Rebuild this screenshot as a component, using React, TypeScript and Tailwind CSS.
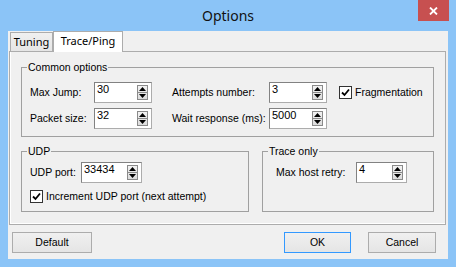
import type { ReactNode } from "react";

const ui = "font-['Liberation_Sans',Arial,sans-serif] text-[10.5px] text-black";

function Spin({ value, className }: { value: string; className: string }) {
  return (
    <div
      className={[
        "flex h-[21px] items-center border border-[#acacac] border-l-[#828282] border-t-[#828282] bg-white pr-[3px]",
        className,
      ].join(" ")}
    >
      <span className="flex-1 self-start pl-[2px] text-[11px] leading-[13px]">{value}</span>
      <div className="flex h-[15px] w-[11px] flex-col border border-[#8a8a8a] bg-gradient-to-b from-[#f2f2f2] to-[#dcdcdc]">
        <div className="flex flex-1 items-center justify-center border-b border-[#8a8a8a]">
          <svg width="7" height="4" viewBox="0 0 7 4">
            <path d="M3.5 0 L7 4 L0 4 Z" fill="#000" />
          </svg>
        </div>
        <div className="flex flex-1 items-center justify-center">
          <svg width="7" height="4" viewBox="0 0 7 4">
            <path d="M0 0 L7 0 L3.5 4 Z" fill="#000" />
          </svg>
        </div>
      </div>
    </div>
  );
}

function Check({ label, className }: { label: string; className?: string }) {
  return (
    <div className={["flex items-center gap-[3px] whitespace-nowrap", className ?? ""].join(" ")}>
      <span className="flex h-[13px] w-[13px] items-center justify-center border border-[#333] bg-white">
        <svg width="9" height="9" viewBox="0 0 9 9">
          <path d="M1 4.5 L3.5 7 L8 1.5" fill="none" stroke="#000" strokeWidth="1.8" />
        </svg>
      </span>
      <span className="leading-[13px]">{label}</span>
    </div>
  );
}

function Group({
  title,
  className,
  children,
}: {
  title: string;
  className: string;
  children: ReactNode;
}) {
  return (
    <fieldset className={["border border-[#a0a0a0] p-0", className].join(" ")}>
      <legend className="ml-[5px] px-[1px] leading-[13px]">{title}</legend>
      {children}
    </fieldset>
  );
}

function Btn({ label, className }: { label: string; className: string }) {
  return (
    <button
      type="button"
      className={[
        "flex h-[21px] items-center justify-center border bg-gradient-to-b from-[#f0f0f0] to-[#e5e5e5] leading-[13px]",
        className,
      ].join(" ")}
    >
      {label}
    </button>
  );
}

export default function App() {
  return (
    <div className={`h-[267px] w-[456px] overflow-hidden bg-[#8bc4f7] ${ui}`}>
      {/* title bar */}
      <div className="relative flex h-[31px] items-center justify-center">
        <span className="font-['Noto_Sans',sans-serif] text-[14px] leading-none text-[#111]">
          Options
        </span>
        <button
          type="button"
          className="absolute right-[7px] top-0 flex h-[21px] w-[31px] items-center justify-center bg-[#c75050]"
        >
          <svg width="9" height="8" viewBox="0 0 9 8">
            <path d="M1 0.5 L8 7.5 M8 0.5 L1 7.5" stroke="#fff" strokeWidth="1.8" />
          </svg>
        </button>
      </div>

      {/* client area */}
      <div className="mx-[8px] flex h-[228px] flex-col bg-[#f0f0f0]">
        {/* tabs */}
        <div className="flex h-[21px] items-end pl-[2px] font-['Noto_Sans',sans-serif] text-[11px]">
          <div className="flex h-[20px] w-[43px] items-center justify-center border border-b-0 border-[#acacac] bg-gradient-to-b from-[#f0f0f0] to-[#e5e5e5] pb-[1px]">
            Tuning
          </div>
          <div className="relative z-10 flex h-[21px] w-[70px] items-center justify-center border border-b-0 border-[#acacac] bg-white pb-[1px]">
            Trace/Ping
          </div>
        </div>

        {/* tab panel */}
        <div className="-mt-[1px] ml-[1px] flex h-[174px] w-[437px] flex-col border border-[#acacac] bg-[#f0f0f0] pl-[11px] pt-[9px] shadow-[inset_1px_-1px_0_#ffffff]">
          <Group title="Common options" className="w-[413px]">
            <div className="flex flex-col gap-[5px] whitespace-nowrap pb-[7px] pl-[8px] pt-[8px]">
              <div className="flex h-[21px] items-center">
                <span className="w-[64px]">Max Jump:</span>
                <Spin value="30" className="w-[58px]" />
                <span className="ml-[20px] w-[97px]">Attempts number:</span>
                <Spin value="3" className="w-[58px]" />
                <Check label="Fragmentation" className="ml-[12px]" />
              </div>
              <div className="flex h-[21px] items-center">
                <span className="w-[64px]">Packet size:</span>
                <Spin value="32" className="w-[58px]" />
                <span className="ml-[20px] w-[97px]">Wait response (ms):</span>
                <Spin value="5000" className="w-[58px]" />
              </div>
            </div>
          </Group>

          <div className="mt-[8px] flex gap-[13px] whitespace-nowrap">
            <Group title="UDP" className="w-[228px]">
              <div className="flex flex-col pb-[8px] pl-[8px] pt-[4px]">
                <div className="flex h-[21px] items-center">
                  <span className="w-[51px]">UDP port:</span>
                  <Spin value="33434" className="w-[61px]" />
                </div>
                <Check label="Increment UDP port (next attempt)" className="mt-[7px]" />
              </div>
            </Group>
            <Group title="Trace only" className="w-[172px]">
              <div className="flex pl-[13px] pt-[4px]">
                <div className="flex h-[21px] items-center">
                  <span className="w-[80px]">Max host retry:</span>
                  <Spin value="4" className="w-[51px]" />
                </div>
              </div>
            </Group>
          </div>
        </div>

        {/* buttons */}
        <div className="mt-[7px] flex items-center pl-[4px] pr-[12px]">
          <Btn label="Default" className="w-[80px] border-[#acacac]" />
          <div className="flex-1" />
          <Btn label="OK" className="w-[67px] border-[#3399ff]" />
          <Btn label="Cancel" className="ml-[17px] w-[68px] border-[#acacac]" />
        </div>
      </div>
    </div>
  );
}
